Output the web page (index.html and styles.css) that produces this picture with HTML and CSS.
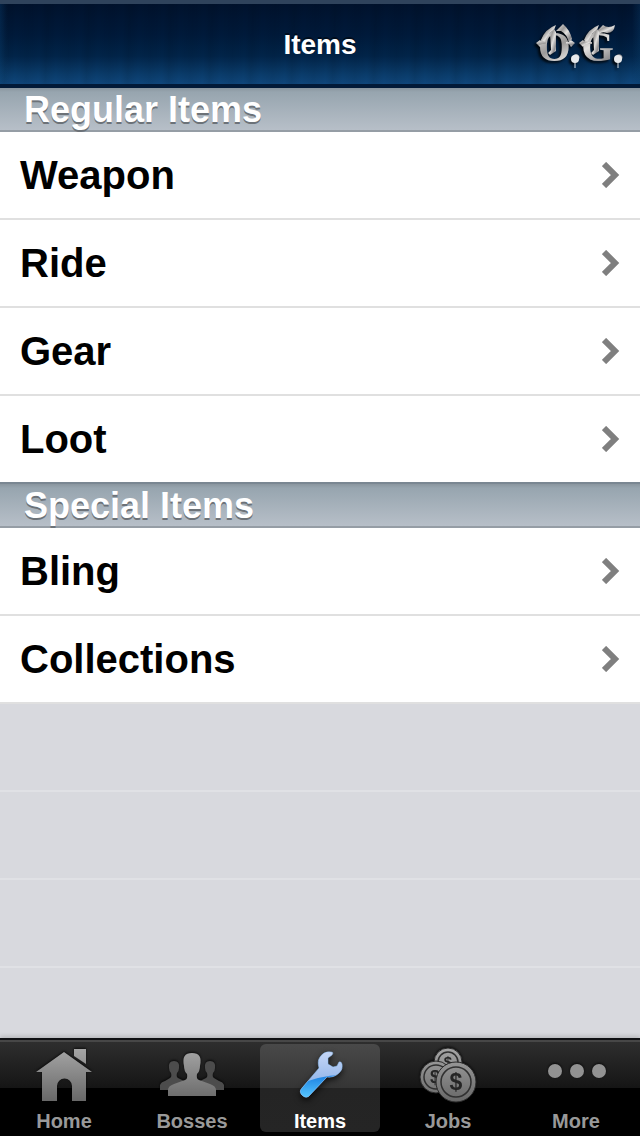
FILE: index.html
```html
<!DOCTYPE html>
<html lang="en">
<head>
  <meta charset="UTF-8">
  <meta name="viewport" content="width=device-width, initial-scale=1">
  <title>Items</title>
  <link rel="stylesheet" href="styles.css">
</head>
<body>
  <header class="navbar">
    <h1 class="navbar-title">Items</h1>
    <svg class="logo" viewBox="0 0 88 52" aria-hidden="true">
      <defs>
        <linearGradient id="metal" x1="0" y1="0" x2="1" y2="1">
          <stop offset="0" stop-color="#f4f2f0"/>
          <stop offset="0.35" stop-color="#9c9a99"/>
          <stop offset="0.55" stop-color="#e2e0de"/>
          <stop offset="0.8" stop-color="#8a898c"/>
          <stop offset="1" stop-color="#f0eeec"/>
        </linearGradient>
      </defs>
      <text class="logo-text" x="2" y="41">O.G.</text>
      <!-- crests, spikes and inner bars -->
      <g fill="url(#metal)">
        <path d="M5 20 Q9 9 20 5 L18 10 Q11 14 9 22 Z"/>
        <path d="M20 11 L27 4 Q34 10 36 19 L33 23 Q31 14 25 11 Z"/>
        <path d="M14 13 L18 9 L20 12 V31 L14 35 L12 33 L15 30 Z"/>
        <path d="M0 23 L4 20 L6 22 H10 V24 H6 L4 27 Z M30 22 H33 L35 20 L39 23 L35 27 L33 24 H30 Z"/>
        <path d="M48 20 Q52 9 63 5 L61 10 Q54 14 52 22 Z"/>
        <path d="M61 11 L67 5 Q72 9 79 5 Q78 13 71 13 Q66 11 63 14 Z"/>
        <path d="M57 13 L61 9 L63 12 V31 L57 35 L55 33 L58 30 Z"/>
        <path d="M43 23 L47 20 L49 22 H56 V24 H49 L47 27 Z"/>
      </g>
      <g fill="none" stroke="#dfe3e7">
        <path d="M39 40 V48 M82 40 V48"/>
      </g>
      <g fill="#e6e9ec">
        <circle cx="39" cy="39" r="4"/>
        <circle cx="82" cy="39" r="4"/>
      </g>
    </svg>
  </header>

  <main class="content">
    <section>
      <h2 class="section-title">Regular Items</h2>
      <ul class="list">
        <li><a class="row" href="#weapon">Weapon<svg class="chevron" viewBox="0 0 18 26" aria-hidden="true"><path d="M2 2 L13 13 L2 24"/></svg></a></li>
        <li><a class="row" href="#ride">Ride<svg class="chevron" viewBox="0 0 18 26" aria-hidden="true"><path d="M2 2 L13 13 L2 24"/></svg></a></li>
        <li><a class="row" href="#gear">Gear<svg class="chevron" viewBox="0 0 18 26" aria-hidden="true"><path d="M2 2 L13 13 L2 24"/></svg></a></li>
        <li><a class="row row-end" href="#loot">Loot<svg class="chevron" viewBox="0 0 18 26" aria-hidden="true"><path d="M2 2 L13 13 L2 24"/></svg></a></li>
      </ul>
    </section>
    <section>
      <h2 class="section-title">Special Items</h2>
      <ul class="list">
        <li><a class="row" href="#bling">Bling<svg class="chevron" viewBox="0 0 18 26" aria-hidden="true"><path d="M2 2 L13 13 L2 24"/></svg></a></li>
        <li><a class="row" href="#collections">Collections<svg class="chevron" viewBox="0 0 18 26" aria-hidden="true"><path d="M2 2 L13 13 L2 24"/></svg></a></li>
      </ul>
    </section>
  </main>

  <nav class="tabbar">
    <a class="tab" href="#home">
      <svg class="tab-icon" viewBox="0 0 64 60" aria-hidden="true">
        <defs>
          <linearGradient id="gray" gradientUnits="userSpaceOnUse" x1="0" y1="4" x2="0" y2="57">
            <stop offset="0" stop-color="#a6a6a6"/>
            <stop offset="1" stop-color="#686868"/>
          </linearGradient>
        </defs>
        <g fill="url(#gray)">
          <path d="M32 8 L60 28 H54 V57 H40 V42 A7.5 7.5 0 0 0 25 42 V57 H10 V28 H4 Z"/>
          <path d="M42 5 H54 V20 L42 12 Z"/>
        </g>
      </svg>
      <span>Home</span>
    </a>
    <a class="tab" href="#bosses">
      <svg class="tab-icon" viewBox="0 0 64 60" aria-hidden="true">
        <g fill="#4c4c4c">
          <path d="M0 46 V41 Q1 38 5 37 L10 34 Q12 33 11 29 Q9 27 9 24 Q8 17 14 17 Q20 17 19 24 Q19 27 17 29 Q16 33 18 34 L26 38 V46 Z"/>
          <path d="M64 46 V41 Q63 38 59 37 L54 34 Q52 33 53 29 Q55 27 55 24 Q56 17 50 17 Q44 17 45 24 Q45 27 47 29 Q48 33 46 34 L38 38 V46 Z"/>
        </g>
        <path fill="url(#gray)" d="M8 52 V46 Q8 42 14 40 L25 36 Q28 35 27 30 Q24 27 24 22 Q21 9 32 9 Q43 9 40 22 Q40 27 37 30 Q36 35 39 36 L50 40 Q56 42 56 46 V52 Z"/>
      </svg>
      <span>Bosses</span>
    </a>
    <a class="tab tab-active" href="#items" aria-current="page">
      <svg class="tab-icon" viewBox="0 0 64 60" aria-hidden="true">
        <defs>
          <linearGradient id="pale" x1="0" y1="0" x2="0" y2="1">
            <stop offset="0" stop-color="#d3dffa"/>
            <stop offset="1" stop-color="#6f9fe0"/>
          </linearGradient>
          <linearGradient id="blue" gradientUnits="userSpaceOnUse" x1="0" y1="31" x2="0" y2="53">
            <stop offset="0" stop-color="#1b7fe0"/>
            <stop offset="1" stop-color="#55c5ff"/>
          </linearGradient>
          <clipPath id="wrench">
            <path d="M31 24 Q29 17 32 13 Q36 7 43 8 Q46 8 44 11 L40 14 L40 20 L45 23 L49 22 L51 18 Q53 17 54 20 Q55 25 52 28 Q47 34 39 33 L22 51 Q19 55 15 52 Q10 48 14 44 Z"/>
          </clipPath>
        </defs>
        <g clip-path="url(#wrench)">
          <rect width="64" height="60" fill="url(#pale)"/>
          <path d="M8 41 Q23 36 30 34 Q42 31 56 31 V60 H8 Z" fill="url(#blue)"/>
        </g>
        <path fill="none" stroke="#8fc2f8" stroke-width="0.5" d="M31 24 Q29 17 32 13 Q36 7 43 8 Q46 8 44 11 L40 14 L40 20 L45 23 L49 22 L51 18 Q53 17 54 20 Q55 25 52 28 Q47 34 39 33 L22 51 Q19 55 15 52 Q10 48 14 44 Z"/>
      </svg>
      <span>Items</span>
    </a>
    <a class="tab" href="#jobs">
      <svg class="tab-icon coins" viewBox="0 0 64 60" aria-hidden="true">
        <g>
          <circle cx="32" cy="18" r="14"/>
          <circle class="coin-ring" cx="32" cy="18" r="10"/>
          <text x="32" y="23" font-size="15">$</text>
        </g>
        <g>
          <circle cx="20" cy="33" r="16"/>
          <circle class="coin-ring" cx="20" cy="33" r="12"/>
          <text x="19" y="39" font-size="18">$</text>
        </g>
        <g>
          <circle cx="40" cy="38" r="20"/>
          <circle class="coin-ring" cx="40" cy="38" r="15"/>
          <text x="40" y="46" font-size="23">$</text>
        </g>
      </svg>
      <span>Jobs</span>
    </a>
    <a class="tab" href="#more">
      <svg class="tab-icon" viewBox="0 0 64 60" aria-hidden="true">
        <g fill="#929292">
          <circle cx="11" cy="27" r="7"/>
          <circle cx="33" cy="27" r="7"/>
          <circle cx="55" cy="27" r="7"/>
        </g>
      </svg>
      <span>More</span>
    </a>
  </nav>
</body>
</html>
```

FILE: styles.css
```css
* {
  box-sizing: border-box;
}
body {
  margin: 0;
  min-height: 100vh;
  display: flex;
  flex-direction: column;
  font-family: "Liberation Sans", Helvetica, Arial, sans-serif;
  font-weight: bold;
  background-color: #d8d9de;
}
a {
  color: inherit;
  text-decoration: none;
}

/* Top bar */
.navbar {
  display: grid;
  grid-template-columns: 1fr auto 1fr;
  align-items: center;
  height: 88px;
  padding: 0 16px;
  color: #fff;
  border-top: 4px solid #2f435c;
  border-bottom: 4px solid #021a38;
  background:
    repeating-linear-gradient(92deg, rgba(0, 0, 0, 0) 0, rgba(0, 0, 0, 0.08) 7px, rgba(0, 0, 0, 0) 17px, rgba(0, 0, 0, 0.05) 29px, rgba(0, 0, 0, 0) 41px),
    linear-gradient(to right, rgba(12, 70, 120, 0.3), rgba(12, 70, 120, 0) 8px, rgba(12, 70, 120, 0) calc(100% - 8px), rgba(12, 70, 120, 0.3)),
    linear-gradient(#00122d, #001a3b 40%, #012449 65%, #0a3c6b 88%, #0f467b);
}
.navbar-title {
  grid-column: 2;
  margin: 0;
  padding-top: 2px;
  font-size: 28px;
  line-height: 32px;
  text-shadow: 0 -2px 0 rgba(0, 0, 0, 0.5);
}
.logo {
  justify-self: end;
  width: 88px;
  height: 52px;
  margin-top: 4px;
  filter: drop-shadow(-2px 2px 1px rgba(0, 0, 0, 0.8));
}
.logo-text {
  font-family: "Liberation Serif", "Times New Roman", serif;
  font-size: 42px;
  fill: url(#metal);
}

/* Lists */
.content {
  flex: 1;
  background: repeating-linear-gradient(#d8d9de 0, #d8d9de 86px, #e0e1e5 86px, #e0e1e5 88px);
}
.section-title {
  height: 44px;
  margin: 0;
  padding: 1px 24px 0;
  font-size: 36px;
  line-height: 42px;
  color: #fff;
  text-shadow: 0 2px 0 #6c7278;
  background: linear-gradient(#8a969f 0, #97a5af 4px, #b7bfc8 42px);
  border-bottom: 2px solid #959da5;
}
.list {
  margin: 0;
  padding: 0;
  list-style: none;
}
.row {
  display: flex;
  align-items: center;
  justify-content: space-between;
  height: 88px;
  padding: 0 20px;
  font-size: 40px;
  line-height: 48px;
  color: #000;
  background-color: #fff;
  border-bottom: 2px solid #e0e0e0;
}
.row-end {
  border-bottom-color: #7a8792;
}
.chevron {
  width: 18px;
  height: 26px;
  fill: none;
  stroke: #7f7f7f;
  stroke-width: 6;
}

/* Bottom tabs */
.tabbar {
  display: flex;
  padding: 2px 0 4px;
  border-top: 2px solid #101114;
  background: linear-gradient(#474747 0, #474747 2px, #2e2e2e 2px, #151515 48px, #000 48px);
  box-shadow: 0 -2px 4px rgba(0, 0, 0, 0.15);
}
.tab {
  flex: 1;
  display: flex;
  flex-direction: column;
  align-items: center;
  margin: 2px 4px 0;
  color: #999;
  font-size: 20px;
  line-height: 22px;
  border-radius: 6px;
}
.tab span {
  margin-top: 6px;
}
.tab-active {
  color: #fff;
  background: linear-gradient(#494949, #353535 44px, #242424 44px, #252525);
}
.tab-icon {
  width: 64px;
  height: 60px;
  filter: drop-shadow(0 -1px 1px rgba(0, 0, 0, 0.7));
}
.tab-active .tab-icon {
  filter: drop-shadow(0 3px 3px rgba(0, 0, 0, 0.7));
}
.coins circle {
  fill: url(#gray);
  stroke: #2a2a2a;
}
.coins .coin-ring {
  fill: none;
  stroke: #303030;
  stroke-width: 1.5;
}
.coins text {
  fill: #252525;
  text-anchor: middle;
}
```
